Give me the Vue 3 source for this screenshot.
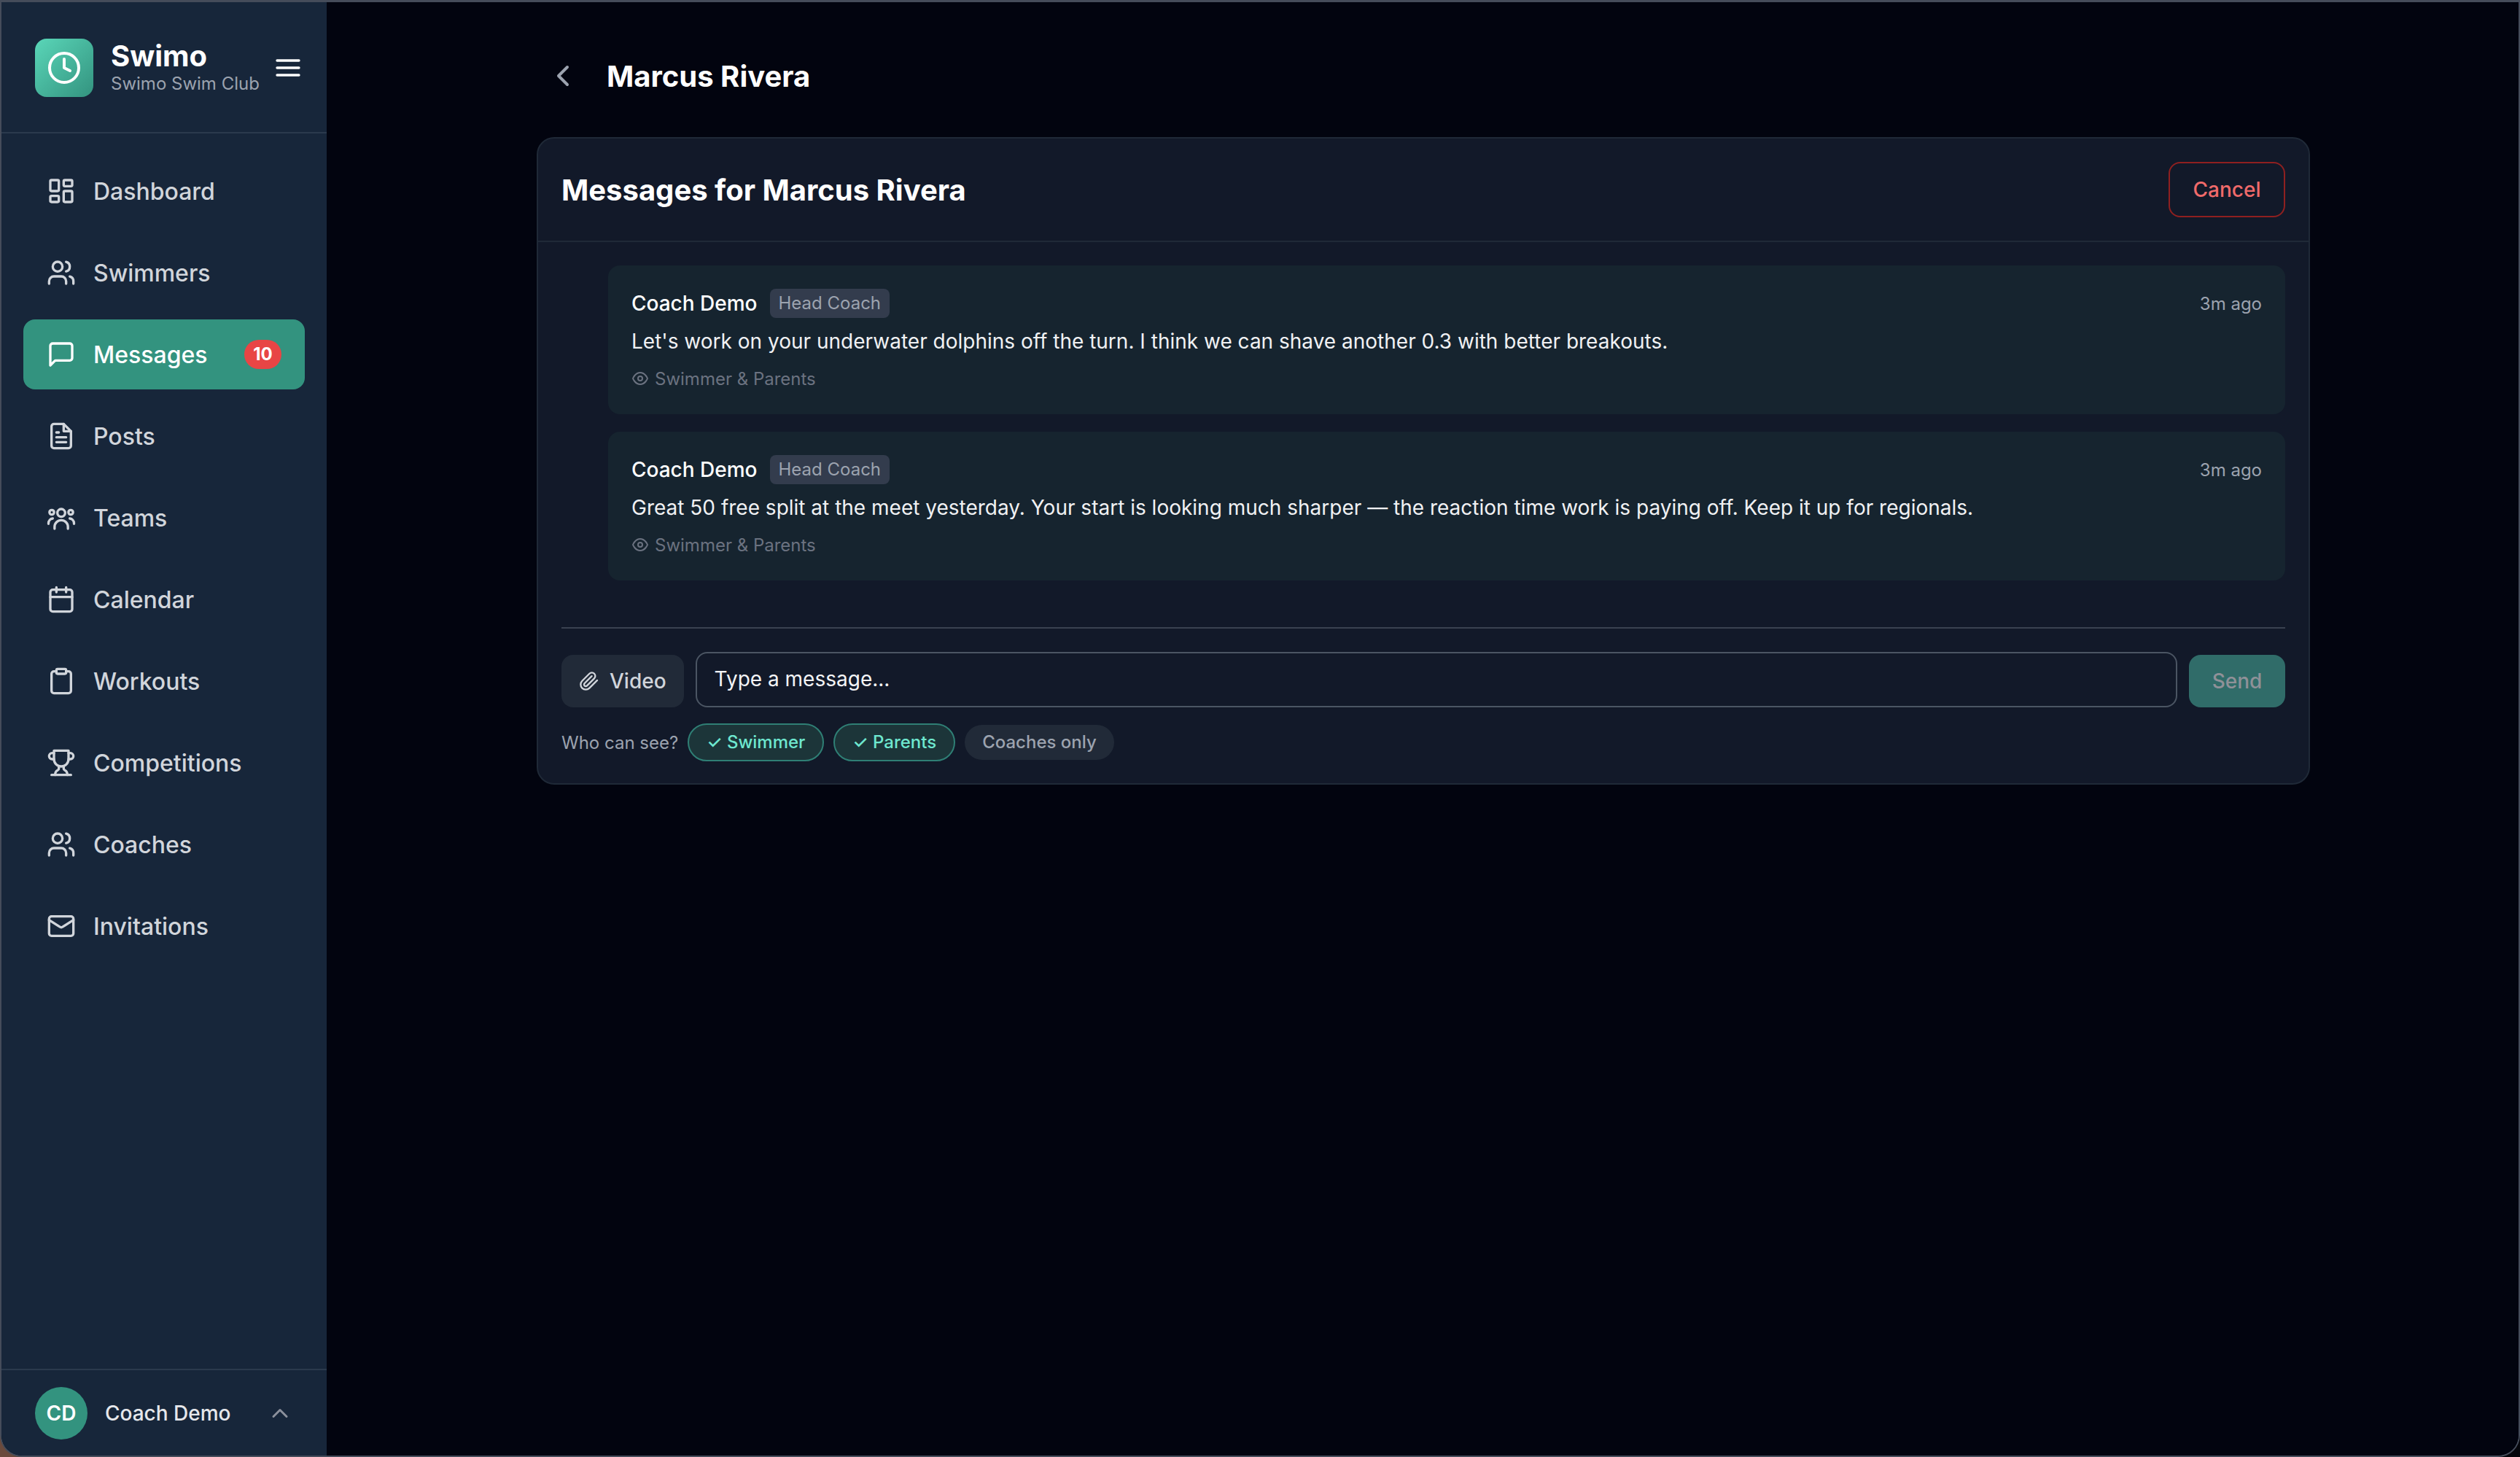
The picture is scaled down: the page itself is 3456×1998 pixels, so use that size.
<template>
  <div class="window">
    <div class="app">
      <aside class="sidebar">
        <div class="brand">
          <div class="logo">
            <svg viewBox="0 0 24 24" class="logo-icon"><circle cx="12" cy="12" r="10" /><path d="M12 6v6l4 2" /></svg>
          </div>
          <div class="brand-text">
            <div class="brand-name">Swimo</div>
            <div class="brand-club">Swimo Swim Club</div>
          </div>
          <button class="menu-btn">
            <svg viewBox="0 0 24 24" class="icon"><path d="M3 6h18M3 12h18M3 18h18" /></svg>
          </button>
        </div>

        <nav class="nav">
          <a v-for="item in navItems" :key="item.label" class="nav-item" :class="{ active: item.active }">
            <svg viewBox="0 0 24 24" class="icon" v-html="item.icon"></svg>
            <span>{{ item.label }}</span>
            <span v-if="item.badge" class="badge">{{ item.badge }}</span>
          </a>
        </nav>

        <div class="user">
          <div class="avatar">CD</div>
          <span class="user-name">Coach Demo</span>
          <svg viewBox="0 0 24 24" class="user-chevron"><path d="m18 15-6-6-6 6" /></svg>
        </div>
      </aside>

      <main class="main">
        <div class="content">
          <div class="page-head">
            <button class="back-btn">
              <svg viewBox="0 0 24 24" class="back-icon"><path d="m15 18-6-6 6-6" /></svg>
            </button>
            <h1>Marcus Rivera</h1>
          </div>

          <section class="card">
            <header class="card-head">
              <h2>Messages for Marcus Rivera</h2>
              <button class="cancel-btn">Cancel</button>
            </header>

            <div class="card-body">
              <div class="messages">
                <article v-for="msg in messages" :key="msg.text" class="message">
                  <div class="msg-top">
                    <span class="msg-author">Coach Demo</span>
                    <span class="msg-role">Head Coach</span>
                    <span class="msg-time">3m ago</span>
                  </div>
                  <p class="msg-text">{{ msg.text }}</p>
                  <div class="msg-meta">
                    <svg viewBox="0 0 24 24" class="eye"><path d="M2 12s3-8 10-8 10 8 10 8-3 8-10 8-10-8-10-8Z" /><circle cx="12" cy="12" r="3" /></svg>
                    Swimmer &amp; Parents
                  </div>
                </article>
              </div>

              <div class="composer">
                <button class="video-btn">
                  <svg viewBox="0 0 24 24" class="clip"><path d="m21.44 11.05-9.19 9.19a6 6 0 0 1-8.49-8.49l8.57-8.57A4 4 0 1 1 18 8.84l-8.59 8.57a2 2 0 0 1-2.83-2.83l8.49-8.48" /></svg>
                  Video
                </button>
                <div class="msg-input">Type a message...</div>
                <button class="send-btn">Send</button>
              </div>

              <div class="audience">
                <span class="audience-label">Who can see?</span>
                <span class="chip on">✓ Swimmer</span>
                <span class="chip on">✓ Parents</span>
                <span class="chip">Coaches only</span>
              </div>
            </div>
          </section>
        </div>
      </main>
    </div>
  </div>
</template>

<script setup>
const users = '<path d="M16 21v-2a4 4 0 0 0-4-4H6a4 4 0 0 0-4 4v2"/><circle cx="9" cy="7" r="4"/><path d="M22 21v-2a4 4 0 0 0-3-3.87"/><path d="M16 3.13a4 4 0 0 1 0 7.75"/>'

const navItems = [
  { label: 'Dashboard', icon: '<rect x="3" y="3" width="7" height="9" rx="1"/><rect x="14" y="3" width="7" height="5" rx="1"/><rect x="14" y="12" width="7" height="9" rx="1"/><rect x="3" y="16" width="7" height="5" rx="1"/>' },
  { label: 'Swimmers', icon: users },
  { label: 'Messages', active: true, badge: 10, icon: '<path d="M21 15a2 2 0 0 1-2 2H7l-4 4V5a2 2 0 0 1 2-2h14a2 2 0 0 1 2 2z"/>' },
  { label: 'Posts', icon: '<path d="M14 2H6a2 2 0 0 0-2 2v16a2 2 0 0 0 2 2h12a2 2 0 0 0 2-2V8z"/><path d="M14 2v6h6"/><path d="M16 13H8M16 17H8M10 9H8"/>' },
  { label: 'Teams', icon: '<circle cx="12" cy="8" r="3.2"/><path d="M6.5 21v-1.5a5.5 5.5 0 0 1 11 0V21"/><circle cx="4.2" cy="7.5" r="1.9"/><circle cx="19.8" cy="7.5" r="1.9"/><path d="M1.5 17v-.5A4 4 0 0 1 5 12.6"/><path d="M22.5 17v-.5a4 4 0 0 0-3.5-3.9"/>' },
  { label: 'Calendar', icon: '<rect x="3" y="4" width="18" height="18" rx="2"/><path d="M16 2v4M8 2v4M3 10h18"/>' },
  { label: 'Workouts', icon: '<rect x="8" y="2" width="8" height="4" rx="1"/><path d="M16 4h2a2 2 0 0 1 2 2v14a2 2 0 0 1-2 2H6a2 2 0 0 1-2-2V6a2 2 0 0 1 2-2h2"/>' },
  { label: 'Competitions', icon: '<path d="M6 9H4.5a2.5 2.5 0 0 1 0-5H6"/><path d="M18 9h1.5a2.5 2.5 0 0 0 0-5H18"/><path d="M4 22h16"/><path d="M10 14.66V17c0 .55-.47.98-.97 1.21C7.85 18.75 7 20.24 7 22"/><path d="M14 14.66V17c0 .55.47.98.97 1.21C16.15 18.75 17 20.24 17 22"/><path d="M18 2H6v7a6 6 0 0 0 12 0V2Z"/>' },
  { label: 'Coaches', icon: users },
  { label: 'Invitations', icon: '<rect x="2" y="4" width="20" height="16" rx="2"/><path d="m22 7-8.97 5.7a1.94 1.94 0 0 1-2.06 0L2 7"/>' }
]

const messages = [
  { text: "Let's work on your underwater dolphins off the turn. I think we can shave another 0.3 with better breakouts." },
  { text: 'Great 50 free split at the meet yesterday. Your start is looking much sharper — the reaction time work is paying off. Keep it up for regionals.' }
]
</script>

<style>
html,
body {
  margin: 0;
  background: #02040f;
}
</style>

<style scoped>
.window {
  width: 3456px;
  height: 1998px;
  background: linear-gradient(90deg, #6b4a3c 0, #6b4a3c 60px, #05060c 61px);
  font-family: Inter, "Liberation Sans", sans-serif;
  color: #fff;
}

.app {
  box-sizing: border-box;
  width: 100%;
  height: 100%;
  display: flex;
  overflow: hidden;
  background: #02040f;
  border: 2px solid #454c5a;
  border-top-width: 3px;
  border-radius: 0 0 30px 30px;
}

button {
  font-family: inherit;
  border: none;
  padding: 0;
  background: none;
  color: inherit;
}

svg {
  fill: none;
  stroke: currentColor;
  stroke-width: 2;
  stroke-linecap: round;
  stroke-linejoin: round;
  flex-shrink: 0;
}

.icon {
  width: 40px;
  height: 40px;
}

/* sidebar */
.sidebar {
  width: 446px;
  flex-shrink: 0;
  display: flex;
  flex-direction: column;
  background: #17263a;
}

.brand {
  display: flex;
  align-items: center;
  height: 131px;
  padding: 49px 0 0 46px;
  box-sizing: content-box;
  border-bottom: 2px solid #2b3a4d;
}

.brand {
  height: 82px;
  padding-bottom: 47px;
}

.logo {
  width: 80px;
  height: 80px;
  border-radius: 16px;
  background: linear-gradient(135deg, #5ad6b8, #33937f);
  display: flex;
  align-items: center;
  justify-content: center;
  color: #fff;
}

.logo-icon {
  width: 48px;
  height: 48px;
}

.brand-text {
  margin-left: 24px;
}

.brand-name {
  font-size: 40px;
  line-height: 44px;
  font-weight: 700;
}

.brand-club {
  font-size: 24px;
  line-height: 32px;
  color: #9ca3af;
}

.menu-btn {
  margin-left: 19px;
  width: 40px;
  height: 40px;
  color: #fff;
}

.nav {
  display: flex;
  flex-direction: column;
  gap: 16px;
  padding: 31px 30px 0;
}

.nav-item {
  display: flex;
  align-items: center;
  gap: 24px;
  height: 96px;
  padding: 0 32px;
  border-radius: 16px;
  font-size: 32px;
  font-weight: 500;
  color: #d1d5db;
}

.nav-item.active {
  background: #33937f;
  color: #fff;
}

.badge {
  margin-left: auto;
  min-width: 51px;
  height: 40px;
  border-radius: 20px;
  background: #e84545;
  font-size: 24px;
  font-weight: 700;
  line-height: 40px;
  text-align: center;
  color: #fff;
}

.user {
  margin-top: auto;
  display: flex;
  align-items: center;
  gap: 24px;
  padding: 23px 46px 22px 46px;
  border-top: 2px solid #2b3a4d;
}

.avatar {
  width: 72px;
  height: 72px;
  border-radius: 50%;
  background: #33937f;
  display: flex;
  align-items: center;
  justify-content: center;
  font-size: 28px;
  font-weight: 600;
}

.user-name {
  font-size: 28px;
  font-weight: 500;
  color: #e5e7eb;
}

.user-chevron {
  margin-left: auto;
  width: 36px;
  height: 36px;
  color: #8b909c;
}

/* main */
.main {
  flex: 1;
  padding: 65px 0 0 2px;
  background: #02040f;
}

.content {
  width: 2432px;
  margin: 0 auto;
}

.page-head {
  display: flex;
  align-items: center;
  gap: 24px;
  margin-bottom: 48px;
}

.back-btn {
  width: 72px;
  height: 72px;
  display: flex;
  align-items: center;
  justify-content: center;
  color: #9ca3af;
}

.back-icon {
  width: 48px;
  height: 48px;
}

h1 {
  margin: 0;
  font-size: 40px;
  font-weight: 700;
}

.card {
  box-sizing: border-box;
  background: #121929;
  border: 2px solid #1f2937;
  border-radius: 24px;
}

.card-head {
  display: flex;
  align-items: center;
  justify-content: space-between;
  padding: 32px 32px 32px 32px;
  border-bottom: 2px solid #1f2937;
}

h2 {
  margin: 0;
  font-size: 40px;
  font-weight: 700;
}

.cancel-btn {
  box-sizing: border-box;
  width: 160px;
  height: 76px;
  border: 2px solid #8f2020;
  border-radius: 16px;
  font-size: 28px;
  font-weight: 500;
  color: #f06a6a;
}

.card-body {
  padding: 32px 32px 30px;
}

.messages {
  display: flex;
  flex-direction: column;
  gap: 24px;
  margin-left: 64px;
  padding-bottom: 64px;
  border-bottom: 2px solid #3a4250;
}

.message {
  box-sizing: border-box;
  height: 204px;
  padding: 32px;
  background: #16242f;
  border-radius: 16px;
}

.messages {
  margin-left: 0;
  padding-left: 64px;
}

.msg-top {
  display: flex;
  align-items: center;
  height: 40px;
}

.msg-author {
  font-size: 28px;
  font-weight: 500;
}

.msg-role {
  margin-left: 17px;
  padding: 0 12px;
  height: 40px;
  line-height: 40px;
  border-radius: 8px;
  background: #333c4d;
  font-size: 24px;
  color: #9ca3af;
}

.msg-time {
  margin-left: auto;
  font-size: 24px;
  color: #9ca3af;
}

.msg-text {
  margin: 10px 0 12px;
  font-size: 28px;
  line-height: 44px;
  color: #f0f1f3;
}

.msg-meta {
  display: flex;
  align-items: center;
  gap: 8px;
  height: 34px;
  font-size: 24px;
  color: #6b7280;
}

.eye {
  width: 24px;
  height: 24px;
}

.composer {
  display: flex;
  align-items: flex-end;
  gap: 16px;
  margin-top: 32px;
}

.video-btn {
  display: flex;
  align-items: center;
  gap: 14px;
  height: 72px;
  padding: 0 24px;
  border-radius: 16px;
  background: #212a38;
  font-size: 28px;
  font-weight: 500;
  color: #d1d5db;
}

.clip {
  width: 28px;
  height: 28px;
}

.msg-input {
  box-sizing: border-box;
  flex: 1;
  height: 76px;
  padding: 0 24px;
  border: 2px solid #4b5563;
  border-radius: 16px;
  font-size: 28px;
  line-height: 70px;
  color: #f3f4f6;
}

.send-btn {
  width: 132px;
  height: 72px;
  border-radius: 16px;
  background: #306c69;
  font-size: 28px;
  font-weight: 500;
  color: #8f9198;
}

.audience {
  display: flex;
  align-items: center;
  gap: 13px;
  margin-top: 22px;
  font-size: 24px;
}

.audience-label {
  color: #9ca3af;
}

.chip {
  padding: 8px 24px;
  line-height: 32px;
  border-radius: 26px;
  background: #212a38;
  font-weight: 500;
  color: #9ca3af;
}

.chip.on {
  background: #1c3539;
  border: 2px solid #2f7f75;
  color: #6ee7cf;
}
</style>
